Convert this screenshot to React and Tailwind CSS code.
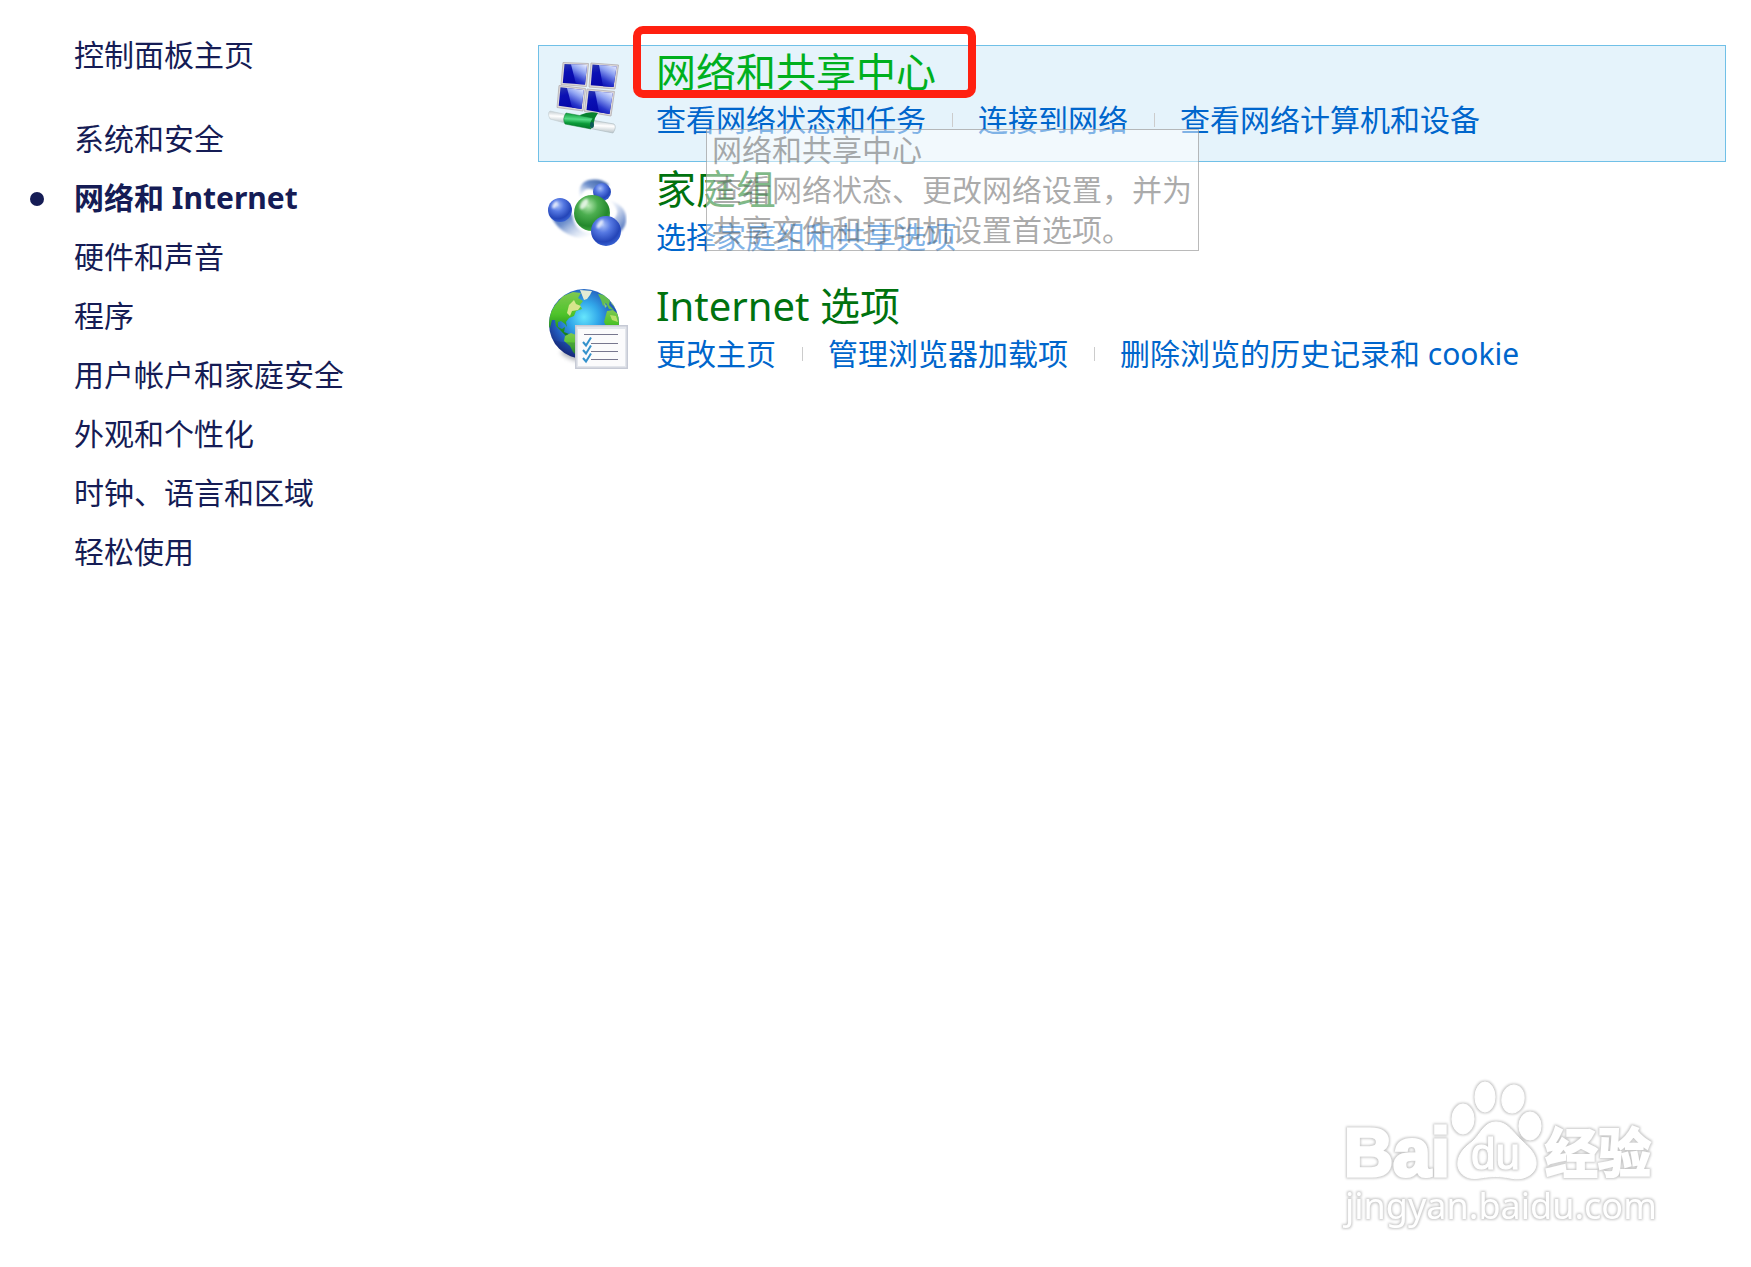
import clsx from 'clsx';

const SIDEBAR_ITEMS = [
  { label: '系统和安全' },
  { label: '网络和 Internet', active: true },
  { label: '硬件和声音' },
  { label: '程序' },
  { label: '用户帐户和家庭安全' },
  { label: '外观和个性化' },
  { label: '时钟、语言和区域' },
  { label: '轻松使用' },
];

const SECTIONS = [
  {
    title: '网络和共享中心',
    Icon: NetworkIcon,
    links: ['查看网络状态和任务', '连接到网络', '查看网络计算机和设备'],
    hovered: true,
  },
  {
    title: '家庭组',
    Icon: HomeGroupIcon,
    links: ['选择家庭组和共享选项'],
  },
  {
    title: 'Internet 选项',
    Icon: InternetIcon,
    links: ['更改主页', '管理浏览器加载项', '删除浏览的历史记录和 cookie'],
  },
];

function NetworkIcon() {
  return (
    <svg width="80" height="88" viewBox="0 -8 80 88" aria-hidden="true">
      <defs>
        <linearGradient id="screen" x1="0" y1="0" x2="0.3" y2="1">
          <stop offset="0" stopColor="#2a38b0" />
          <stop offset="0.4" stopColor="#0a10b4" />
          <stop offset="1" stopColor="#0606a8" />
        </linearGradient>
        <linearGradient id="shine" x1="0.8" y1="0" x2="0.35" y2="1">
          <stop offset="0" stopColor="#dfe7ff" />
          <stop offset="0.35" stopColor="#8ea2f2" />
          <stop offset="0.75" stopColor="#2a38cc" />
          <stop offset="1" stopColor="#0d12b4" />
        </linearGradient>
        <linearGradient id="cable" x1="0.1" y1="0" x2="0" y2="1">
          <stop offset="0" stopColor="#0c9a3a" />
          <stop offset="0.35" stopColor="#56dc86" />
          <stop offset="0.6" stopColor="#0a9a38" />
          <stop offset="1" stopColor="#046a24" />
        </linearGradient>
        <linearGradient id="glass" x1="0.1" y1="0" x2="0" y2="1">
          <stop offset="0" stopColor="#c3ccd0" />
          <stop offset="0.4" stopColor="#ffffff" />
          <stop offset="1" stopColor="#aebabf" />
        </linearGradient>
      </defs>
      <g stroke="#b4adb0" strokeWidth="0.8" fill="#dcd8d8">
        <path d="M16 4.500 41.500 5.500 39.500 28.500 14 26.500Z" />
        <path d="M44 5 71.500 7 68 31 42 29Z" />
        <path d="M12 27.500 38.500 30.500 36 53 10 49.500Z" />
        <path d="M40 31 67.500 33.500 64 58 37.500 53.500Z" />
      </g>
      <g fill="url(#screen)">
        <path d="M17.500 6 40 7 38 26.500 15.800 25Z" />
        <path d="M45.500 6.500 69.500 8.500 66.500 29 43.800 27.200Z" />
        <path d="M13.500 29.300 36.700 32 34.500 51 11.700 47.700Z" />
        <path d="M41.700 32.700 65.700 35 62.500 56 39.500 52Z" />
      </g>
      <g fill="url(#shine)">
        <path d="M24 6.300 40 7 38 26.500 29 26Z" />
        <path d="M52 7 69.500 8.500 66.500 29 56 28.200Z" />
        <path d="M20 30 36.700 32 34.500 51 25 49.600Z" />
        <path d="M48 33.300 65.700 35 62.500 56 52 54.200Z" />
      </g>
      <path d="M3 53Q0 55 3 61L18 65 21 57Z" fill="url(#glass)" stroke="#c3ccd0" strokeWidth="0.6" />
      <path d="M44 62 67 66Q70 69 66 75L41 70Z" fill="url(#glass)" stroke="#a9b7bc" strokeWidth="0.6" />
      <path d="M33 57Q42 53 51 55L48 60Q47 65 45 70L39 67Z" fill="#07822e" />
      <path d="M19 55 46 60Q42 65 44 71L18 66Q15 61 19 55Z" fill="url(#cable)" stroke="#067a2b" strokeWidth="0.5" />
      <ellipse cx="45" cy="67" rx="2" ry="3" fill="#0d5b57" />
    </svg>
  );
}

function HomeGroupIcon() {
  return (
    <svg width="80" height="80" viewBox="0 0 80 80" aria-hidden="true">
      <defs>
        <radialGradient id="blueBall" cx="0.4" cy="0.3" r="0.75">
          <stop offset="0" stopColor="#a9c0f8" />
          <stop offset="0.35" stopColor="#5578e2" />
          <stop offset="0.75" stopColor="#2445b8" />
          <stop offset="1" stopColor="#3c68d8" />
        </radialGradient>
        <radialGradient id="greenBall" cx="0.4" cy="0.3" r="0.75">
          <stop offset="0" stopColor="#b4e8b0" />
          <stop offset="0.35" stopColor="#4cae50" />
          <stop offset="0.75" stopColor="#23882c" />
          <stop offset="1" stopColor="#4ab04a" />
        </radialGradient>
        <linearGradient id="trailLeft" x1="0" y1="0" x2="1" y2="0.8">
          <stop offset="0" stopColor="#3d62b4" />
          <stop offset="0.4" stopColor="#6f90cc" />
          <stop offset="1" stopColor="#dbe6f6" stopOpacity="0.2" />
        </linearGradient>
        <linearGradient id="trailTop" x1="1" y1="0" x2="0" y2="1">
          <stop offset="0" stopColor="#2c5299" />
          <stop offset="0.5" stopColor="#6f90cc" />
          <stop offset="1" stopColor="#dbe6f6" stopOpacity="0.2" />
        </linearGradient>
        <linearGradient id="trailRight" x1="0.8" y1="1" x2="0.2" y2="0">
          <stop offset="0" stopColor="#3f66b8" />
          <stop offset="1" stopColor="#dbe6f6" stopOpacity="0.3" />
        </linearGradient>
        <filter id="soft" x="-20%" y="-20%" width="140%" height="140%">
          <feGaussianBlur stdDeviation="0.8" />
        </filter>
      </defs>
      <g filter="url(#soft)">
        <path d="M3 46Q9 64 28 70Q40 72 46 66Q28 67 25 47Z" fill="url(#trailLeft)" />
        <path d="M33 31Q30 16 42 13Q54 11 62 18L50 25Q38 16 33 31Z" fill="url(#trailTop)" />
        <path d="M62 33Q78 38 79 50Q80 60 72 66L66 53Q76 44 62 33Z" fill="url(#trailRight)" />
      </g>
      <circle cx="55" cy="25" r="9" fill="url(#blueBall)" />
      <circle cx="13" cy="43" r="12" fill="url(#blueBall)" />
      <circle cx="45" cy="46" r="18" fill="url(#greenBall)" />
      <circle cx="59" cy="64" r="15" fill="url(#blueBall)" />
      <g fill="#ffffff" opacity="0.75" filter="url(#soft)">
        <ellipse cx="37" cy="37" rx="3" ry="6" transform="rotate(35 37 37)" />
        <ellipse cx="53" cy="57" rx="2" ry="5" transform="rotate(35 53 57)" />
        <ellipse cx="8" cy="38" rx="2" ry="4" transform="rotate(35 8 38)" />
      </g>
    </svg>
  );
}

function InternetIcon() {
  return (
    <svg width="82" height="86" viewBox="0 -2 82 86" aria-hidden="true">
      <defs>
        <radialGradient id="ocean" cx="0.5" cy="0.4" r="0.6">
          <stop offset="0" stopColor="#66e6fc" />
          <stop offset="0.35" stopColor="#32a8ea" />
          <stop offset="0.75" stopColor="#2156b8" />
          <stop offset="1" stopColor="#1a2a7c" />
        </radialGradient>
        <linearGradient id="land" x1="0" y1="0" x2="0" y2="1">
          <stop offset="0" stopColor="#7fc850" />
          <stop offset="0.5" stopColor="#4fc42a" />
          <stop offset="1" stopColor="#0f7a1c" />
        </linearGradient>
        <clipPath id="globe">
          <circle cx="37" cy="38" r="35" />
        </clipPath>
        <filter id="blend">
          <feGaussianBlur stdDeviation="0.5" />
        </filter>
        <filter id="shade" x="-30%" y="-60%" width="160%" height="220%">
          <feGaussianBlur stdDeviation="2" />
        </filter>
      </defs>
      <ellipse cx="26" cy="70" rx="13" ry="4" transform="rotate(20 26 70)" fill="#707580" opacity="0.5" filter="url(#shade)" />
      <circle cx="37" cy="38" r="35" fill="url(#ocean)" />
      <g clipPath="url(#globe)">
        <g filter="url(#blend)">
          <path d="M8 19 16 10 26 6 34 7 31 12 36 15 33 19 35 23 29 25 27 30 22 32 19 36 20 41 18 38 14 35 11 36 11 41 15 43 18 41 17 46 22 48 19 50 13 44 9 40 8 34 5 34 3 42 1 40 3 27Z" fill="url(#land)" />
          <path d="M22 19 27 14 29 18 34 20 31 24 25 25 23 30 20 27Z" fill="#d6e58c" />
          <path d="M33 4 45 5 43 9 40 13 37 14 35 9Z" fill="#e2ecd4" />
          <path d="M18 50 24 47 29 49 35 55 34 74 26 66 23 60 17 55Z" fill="url(#land)" />
          <path d="M51 8 58 9 63 14 62 19 67 24 62 23 59 17 56 20 54 14Z" fill="#63bd50" />
          <path d="M57 17 60 20 58 22ZM63 11 70 20 68 22 64 17Z" fill="#8ed070" />
          <path d="M60 25 66 24 71 28 73 34 73 50 60 42 57 36Z" fill="url(#land)" />
          <path d="M63 29 69 30 71 36 65 34Z" fill="#b9df6a" />
        </g>
        <path d="M2 53Q30 62 74 48V80H2Z" fill="#0a1960" opacity="0.2" />
      </g>
      <g>
        <path d="M28 39H81V83H28Z" fill="#c6cad5" />
        <path d="M29.500 40.500H79.500V81.500H29.500Z" fill="#e3e6ec" />
        <path d="M31 43H78V80H31Z" fill="#fbfbfc" />
        <path d="M37 48.500H71M44 57.500H71M44 65.500H71M44 73.500H71" stroke="#77778e" strokeWidth="1" />
        <path d="M36 56 39 59.500 44 51.500M36 64 39 67.500 44 59.500M36 72 39 75.500 44 67.500" fill="none" stroke="#3492cc" strokeWidth="2" />
      </g>
    </svg>
  );
}

function Tooltip() {
  return (
    <div
      role="tooltip"
      className="absolute left-[706px] top-[129px] z-10 border border-[#767676]/50 bg-white/50 pl-[5px] pr-[6px] leading-[40px] text-[#575757]/50"
    >
      <p>网络和共享中心</p>
      <p>
        查看网络状态、更改网络设置，并为
        <br />
        共享文件和打印机设置首选项。
      </p>
    </div>
  );
}

function Section({ title, Icon, links, hovered }) {
  return (
    <section
      className={clsx(
        'flex h-[117px] border pl-2',
        hovered ? 'border-[#70c0e7] bg-[#e5f3fb]' : 'border-transparent'
      )}
    >
      <div className="w-[109px] shrink-0 pt-1">
        <Icon />
      </div>
      <div className="min-w-0">
        <h2 className="relative w-fit text-[40px] leading-[52px]">
          <a href="#" className={hovered ? 'text-[#00b01e]' : 'text-[#00720f]'}>
            {title}
          </a>
          {hovered && (
            <span className="absolute -left-[23px] -top-5 h-[72px] w-[343px] rounded-[10px] border-8 border-[#ff2010]" />
          )}
        </h2>
        <ul className="flex whitespace-nowrap leading-[44px]">
          {links.map((link, i) => (
            <li key={link} className="flex items-center">
              {i > 0 && <span className="ml-[26px] mr-[25px] h-[14px] w-px bg-[#cccccc]" />}
              <a href="#" className="text-[#0066cc]">
                {link}
              </a>
            </li>
          ))}
        </ul>
      </div>
    </section>
  );
}

function Watermark() {
  return (
    <svg
      width="330"
      height="170"
      viewBox="0 0 330 170"
      className="absolute bottom-[27px] right-[94px]"
      role="img"
      aria-label="Baidu 经验"
    >
      <defs>
        {/* white shape with a thin grey glow round it */}
        <filter id="halo" x="-10%" y="-10%" width="120%" height="120%">
          <feMorphology in="SourceAlpha" operator="dilate" radius="1" result="grown" />
          <feGaussianBlur in="grown" stdDeviation="1" result="glow" />
          <feFlood floodColor="#c8c8c8" />
          <feComposite in2="glow" operator="in" result="grey" />
          <feMerge>
            <feMergeNode in="grey" />
            <feMergeNode in="SourceGraphic" />
          </feMerge>
        </filter>
      </defs>
      <g fill="#ffffff" stroke="#ffffff" filter="url(#halo)">
        <ellipse cx="136" cy="49" rx="11" ry="15" />
        <ellipse cx="158" cy="27" rx="10" ry="15" />
        <ellipse cx="186" cy="29" rx="11" ry="14" transform="rotate(10 186 29)" />
        <ellipse cx="203" cy="56" rx="11" ry="14" />
        <path d="M169 52C157 52 154 64 145 72C135 79 130 87 131 96C133 106 142 110 153 108C165 106 173 106 183 108C196 111 208 105 209 95C210 86 204 79 196 72C186 63 181 52 169 52Z" />
        <text x="17" y="106" strokeWidth="3" className="font-['Liberation_Sans'] text-[68px] font-bold">Bai</text>
        <text x="218" y="103" strokeWidth="2" className="font-['Noto_Sans_CJK_SC'] text-[53px] font-bold">经验</text>
        <text x="18" y="149" strokeWidth="0" className="font-['Noto_Sans'] text-[36px]">jingyan.baidu.com</text>
      </g>
      <g fill="#ffffff" stroke="#ffffff" filter="url(#halo)">
        <text x="144" y="99" className="font-['Liberation_Sans'] text-[44px]">du</text>
      </g>
    </svg>
  );
}

export default function App() {
  return (
    <div className="relative flex min-h-screen bg-white font-['Noto_Sans','Noto_Sans_CJK_SC',sans-serif] text-[30px]">
      <nav className="w-[538px] shrink-0 pl-[74px] pt-[25px] leading-[59px] text-[#151c55]">
        <a href="#" className="block">
          控制面板主页
        </a>
        <ul className="mt-[25px]">
          {SIDEBAR_ITEMS.map(({ label, active }) => (
            <li key={label} className={clsx('relative', active && 'font-bold')}>
              {active && (
                <span className="absolute -left-11 top-6 size-[14px] rounded-full bg-[#151c55]" />
              )}
              <a href="#" aria-current={active ? 'page' : undefined}>
                {label}
              </a>
            </li>
          ))}
        </ul>
      </nav>

      <main className="mr-[25px] min-w-0 flex-1 pt-[45px]">
        {SECTIONS.map((section) => (
          <Section key={section.title} {...section} />
        ))}
      </main>

      <Tooltip />
      <Watermark />
    </div>
  );
}
